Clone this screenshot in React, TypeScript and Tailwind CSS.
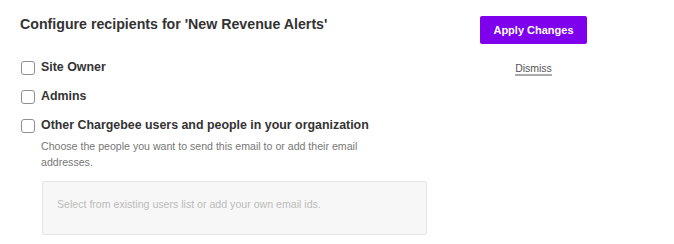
import React from "react";

function Check({ label }: { label: string }) {
  return (
    <label className="flex items-center h-[29px]">
      <span className="w-[14px] h-[14px] rounded-[3px] border border-[#8f8f8f] bg-white ml-[21px] mr-[6px] shrink-0" />
      <span className="text-[12.4px] font-bold text-[#333]">{label}</span>
    </label>
  );
}

export default function App() {
  return (
    <div className="w-[674px] h-[244px] bg-white flex" style={{ fontFamily: '"Liberation Sans", Arial, sans-serif' }}>
      <div className="w-[460px] shrink-0">
        <h1 className="pl-[20px] pt-[15px] text-[14.2px] leading-[18px] font-bold text-[#333]">
          Configure recipients for 'New Revenue Alerts'
        </h1>
        <div className="pt-[20px]">
          <Check label="Site Owner" />
          <Check label="Admins" />
          <Check label="Other Chargebee users and people in your organization" />
        </div>
        <div className="pl-[41px]">
          <p className="text-[10.6px] leading-[15.5px] text-[#777] w-[330px] -mt-[1px]">
            Choose the people you want to send this email to or add their email addresses.
          </p>
          <div className="mt-[11px] ml-[1px] w-[385px] h-[54px] bg-[#f7f7f7] border border-[#e6e6e6] rounded-[2px] px-[14px] pt-[9px]">
            <span className="text-[10.6px] text-[#bbb]">Select from existing users list or add your own email ids.</span>
          </div>
        </div>
      </div>
      <div className="ml-[20px] pt-[16px] flex flex-col items-center w-[107px]">
        <button className="w-[107px] h-[28px] bg-[#7f00ec] rounded-[2px] text-white text-[11px] font-bold">
          Apply Changes
        </button>
        <span className="mt-[17px] text-[10.5px] text-[#555] underline decoration-[#aaa] decoration-2 underline-offset-2">
          Dismiss
        </span>
      </div>
    </div>
  );
}
